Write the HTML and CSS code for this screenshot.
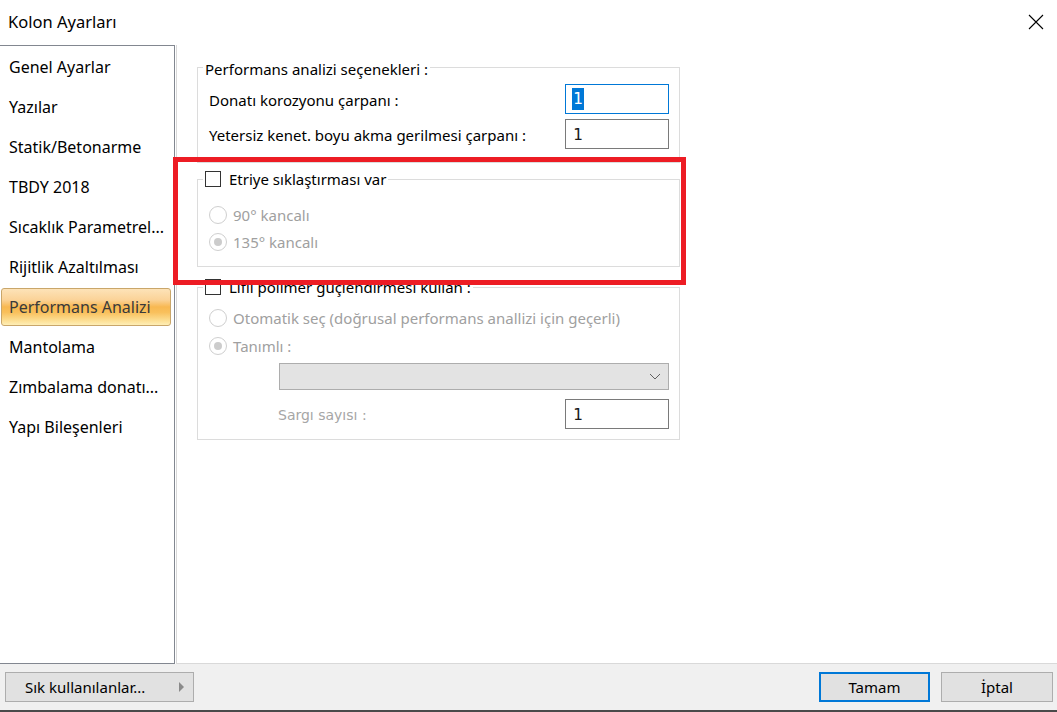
FILE: index.html
```html
<!DOCTYPE html>
<html lang="tr">
<head>
	<meta charset="UTF-8">
	<title>Kolon Ayarları</title>
	<link rel="stylesheet" href="styles.css">
</head>
<body>
	<div class="dialog">
		<div class="titlebar">
			<span class="title">Kolon Ayarları</span>
			<span class="close">
				<svg width="16" height="16" viewBox="0 0 16 16"><path d="M1 1L15 15M15 1L1 15" stroke="#000" stroke-width="1.1"/></svg>
			</span>
		</div>

		<div class="main">
			<ul class="nav">
				<li>Genel Ayarlar</li>
				<li>Yazılar</li>
				<li>Statik/Betonarme</li>
				<li>TBDY 2018</li>
				<li>Sıcaklık Parametrel...</li>
				<li>Rijitlik Azaltılması</li>
				<li class="active">Performans Analizi</li>
				<li>Mantolama</li>
				<li>Zımbalama donatı...</li>
				<li>Yapı Bileşenleri</li>
			</ul>

			<div class="page">
				<!-- genel katsayılar -->
				<fieldset class="group group-factors">
					<legend>Performans analizi seçenekleri :</legend>
					<div class="row">
						<span class="label">Donatı korozyonu çarpanı :</span>
						<span class="field focused"><span class="sel">1</span></span>
					</div>
					<div class="row">
						<span class="label">Yetersiz kenet. boyu akma gerilmesi çarpanı :</span>
						<span class="field">1</span>
					</div>
				</fieldset>

				<!-- etriye -->
				<fieldset class="group group-stirrup">
					<legend><span class="check"></span>Etriye sıklaştırması var</legend>
					<div class="radio"><span class="dot"></span>90° kancalı</div>
					<div class="radio"><span class="dot on"></span>135° kancalı</div>
				</fieldset>

				<!-- FRP sargı -->
				<fieldset class="group group-frp">
					<legend><span class="check"></span>Lifli polimer güçlendirmesi kullan :</legend>
					<div class="radio"><span class="dot"></span>Otomatik seç (doğrusal performans anallizi için geçerli)</div>
					<div class="radio"><span class="dot on"></span>Tanımlı :</div>
					<div class="combo">
						<svg width="12" height="7" viewBox="0 0 12 7"><path d="M1 1l5 5 5-5" fill="none" stroke="#606060" stroke-width="1"/></svg>
					</div>
					<div class="row row-wraps">
						<span class="label small">Sargı sayısı :</span>
						<span class="field">1</span>
					</div>
				</fieldset>

				<div class="mark"></div>
			</div>
		</div>

		<div class="buttons">
			<button class="btn btn-fav">Sık kullanılanlar...<span class="arrow"></span></button>
			<span class="spacer"></span>
			<button class="btn btn-ok">Tamam</button>
			<button class="btn btn-cancel">İptal</button>
		</div>
	</div>
</body>
</html>
```

FILE: styles.css
```css
*{box-sizing:border-box;}
html,body{margin:0;padding:0;}
body{width:1057px;height:712px;overflow:hidden;background:#fff;font-family:"Noto Sans","Open Sans",sans-serif;font-size:15px;color:#000;}
ul{list-style:none;padding:0;margin:0;}

.dialog{display:flex;flex-direction:column;height:712px;border-bottom:2px solid #4a4a4a;}

.titlebar{height:45px;flex:none;display:flex;align-items:center;justify-content:space-between;padding:0 13px 2px 8px;}
.title{font-size:16.5px;}
.close{display:flex;width:16px;height:16px;}

.main{flex:1;display:flex;}

/* sol menü */
.nav{width:175px;flex:none;display:flex;flex-direction:column;border-top:1px solid #828790;border-right:1px solid #828790;border-bottom:1px solid #828790;padding-top:1px;font-size:16px;}
.nav li{height:38px;margin:1px 3px 1px 1px;padding-left:7px;line-height:36px;border:1px solid transparent;border-radius:3px;white-space:nowrap;}
.nav li.active{color:#3a3a3a;border-color:#c9a66a;background:linear-gradient(#fde3b8 0%,#fbd398 30%,#f8b851 50%,#f9c05c 65%,#fde29a 90%,#feeeb6 100%);}

/* sağ sayfa */
.page{flex:1;position:relative;margin-left:1px;border-left:1px solid #d9d9d9;border-bottom:1px solid #d9d9d9;padding:12px 0 0 20px;}

.group{width:483px;margin:0;border:1px solid #dcdcdc;padding:0 10px 0 11px;}
.group legend{height:20px;line-height:20px;padding:0 2px;margin-left:-6px;display:flex;align-items:center;white-space:nowrap;}
.group-factors legend{padding-top:3px;}
.group-factors{padding-top:7px;padding-bottom:13px;}
.group-stirrup{margin-top:6px;padding-top:12px;padding-bottom:11px;}
.group-frp{margin-top:10px;padding-top:7px;padding-bottom:10px;}

.row{display:flex;align-items:center;justify-content:space-between;height:30px;}
.row + .row{margin-top:5px;}
.row-wraps{margin-top:9px;padding-left:69px;}
.label{white-space:nowrap;padding-top:2px;}
.label.small{font-family:"DejaVu Sans",sans-serif;font-size:14px;color:#a6a6a6;}

.field{width:104px;height:30px;border:1px solid #7a7a7a;background:#fff;padding-left:7px;display:flex;align-items:center;font-family:"DejaVu Sans Mono",monospace;font-size:16px;color:#1a1a1a;}
.field.focused{border-color:#0078d7;}
.sel{background:#0078d7;color:#fff;height:22px;line-height:22px;padding:0 1px;margin-left:-1px;}

.check{width:16px;height:16px;border:1px solid #333;background:#fff;margin-right:8px;flex:none;}

.radio{display:flex;align-items:center;height:27px;color:#a0a0a0;white-space:nowrap;}
.group-frp .radio{height:28px;}
.dot{width:18px;height:18px;border:1px solid #cfcfcf;border-radius:50%;margin-right:6px;display:flex;align-items:center;justify-content:center;flex:none;}
.dot.on::after{content:"";width:8px;height:8px;border-radius:50%;background:#cccccc;}

.combo{margin:3px 0 0 70px;height:27px;width:390px;border:1px solid #adadad;background:#e3e3e3;display:flex;align-items:center;justify-content:flex-end;padding-right:7px;}

/* kırmızı işaret çerçevesi */
.mark{position:absolute;left:-4px;top:112px;width:513px;height:128px;border:5px solid #ed1c24;pointer-events:none;}

/* alt düğmeler */
.buttons{height:46px;flex:none;background:#f0f0f0;display:flex;align-items:flex-start;padding:8px 4px 0 5px;}
.spacer{flex:1;}
.btn{height:30px;font-family:inherit;font-size:15px;color:#000;background:#e1e1e1;border:1px solid #adadad;padding:0;margin:0;}
.btn-fav{width:189px;display:flex;align-items:center;justify-content:space-between;padding:0 9px 0 19px;}
.arrow{width:0;height:0;border-top:5px solid transparent;border-bottom:5px solid transparent;border-left:5px solid #8a8a8a;}
.btn-ok{width:111px;border:2px solid #0078d7;margin-right:11px;}
.btn-cancel{width:112px;}
```
